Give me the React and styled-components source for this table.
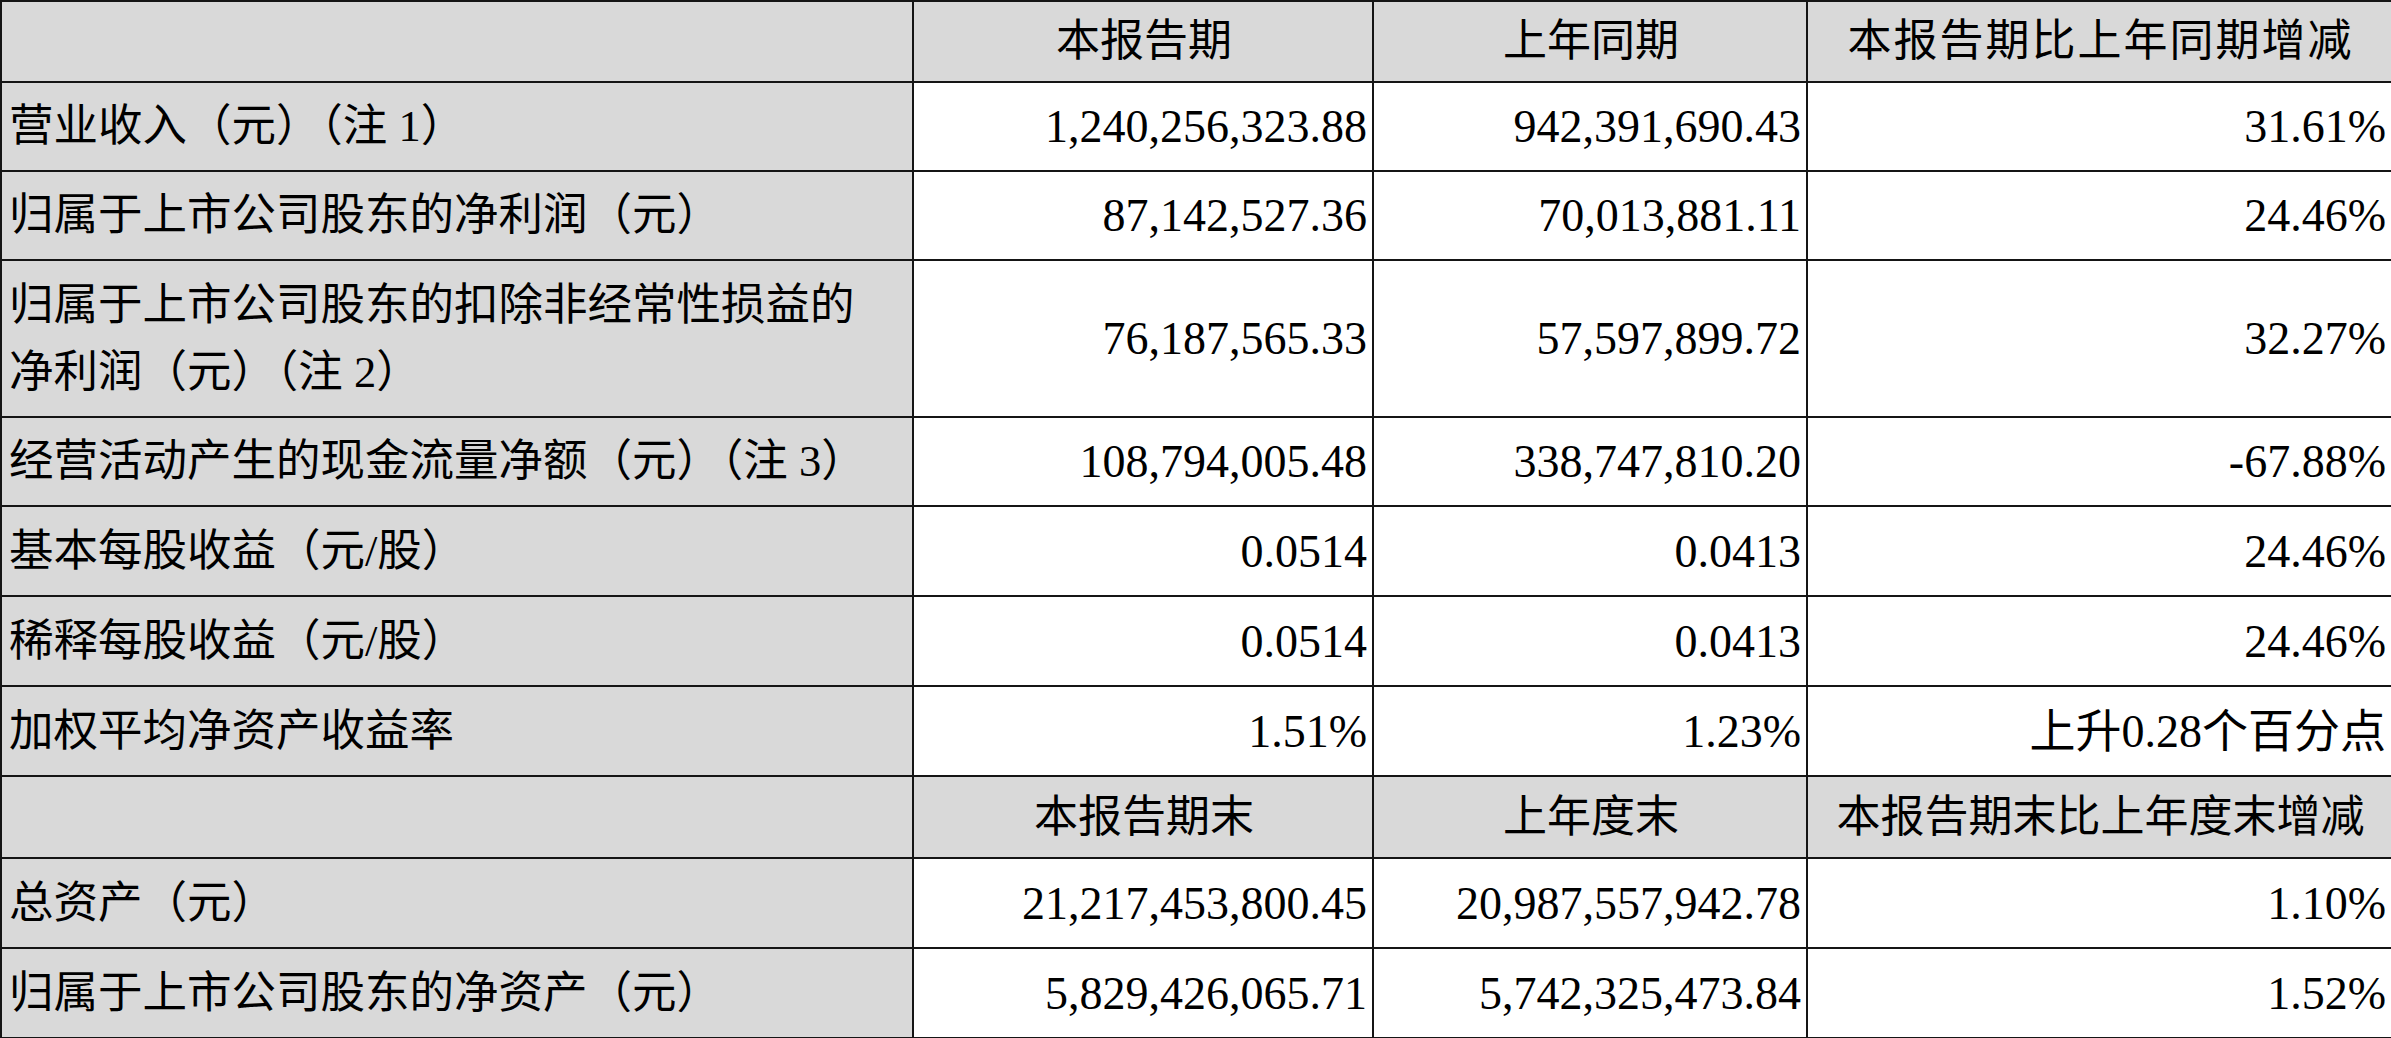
import styled, { createGlobalStyle } from "styled-components";

const GlobalStyle = createGlobalStyle`
  html, body {
    margin: 0;
    padding: 0;
    background: #ffffff;
  }
  body {
    font-family: "Liberation Serif", "Noto Sans CJK SC", serif;
    color: #000;
  }
`;

const Table = styled.table`
  width: 2391px;
  border-collapse: collapse;
  table-layout: fixed;
  font-size: 46px;
  font-family: "Liberation Serif", "Noto Sans CJK SC", serif;
`;

const Row = styled.tr`
  height: ${(p) => p.h}px;
`;

const Cell = styled.td`
  border: 2px solid #151515;
  padding: 0 5px 0 7px;
  vertical-align: middle;
  white-space: nowrap;
  background: #ffffff;
  text-align: right;
  line-height: 67px;
`;

const HeadCell = styled(Cell)`
  background: #d9d9d9;
  text-align: center;
  font-size: 44px;
  letter-spacing: ${(p) => p.$spacing || 0}px;
`;

const Label = styled(Cell)`
  background: #d9d9d9;
  text-align: left;
  font-size: 44.5px;
`;

const periodRows = [
  { h: 89, label: "营业收入（元）（注 1）", a: "1,240,256,323.88", b: "942,391,690.43", c: "31.61%" },
  { h: 89, label: "归属于上市公司股东的净利润（元）", a: "87,142,527.36", b: "70,013,881.11", c: "24.46%" },
  {
    h: 157,
    label: (
      <>
        归属于上市公司股东的扣除非经常性损益的
        <br />
        净利润（元）（注 2）
      </>
    ),
    a: "76,187,565.33",
    b: "57,597,899.72",
    c: "32.27%",
  },
  { h: 89, label: "经营活动产生的现金流量净额（元）（注 3）", a: "108,794,005.48", b: "338,747,810.20", c: "-67.88%" },
  { h: 90, label: "基本每股收益（元/股）", a: "0.0514", b: "0.0413", c: "24.46%" },
  { h: 90, label: "稀释每股收益（元/股）", a: "0.0514", b: "0.0413", c: "24.46%" },
  { h: 90, label: "加权平均净资产收益率", a: "1.51%", b: "1.23%", c: "上升0.28个百分点" },
];

const balanceRows = [
  { h: 90, label: "总资产（元）", a: "21,217,453,800.45", b: "20,987,557,942.78", c: "1.10%" },
  { h: 90, label: "归属于上市公司股东的净资产（元）", a: "5,829,426,065.71", b: "5,742,325,473.84", c: "1.52%" },
];

const DataRow = ({ row }) => (
  <Row h={row.h}>
    <Label>{row.label}</Label>
    <Cell>{row.a}</Cell>
    <Cell>{row.b}</Cell>
    <Cell>{row.c}</Cell>
  </Row>
);

const App = () => {
  return (
    <>
      <GlobalStyle />
      <Table>
        <colgroup>
          <col style={{ width: 912 }} />
          <col style={{ width: 460 }} />
          <col style={{ width: 434 }} />
          <col style={{ width: 585 }} />
        </colgroup>
        <tbody>
          <Row h={81}>
            <HeadCell />
            <HeadCell>本报告期</HeadCell>
            <HeadCell>上年同期</HeadCell>
            <HeadCell $spacing={2}>本报告期比上年同期增减</HeadCell>
          </Row>
          {periodRows.map((row, i) => (
            <DataRow key={"p" + i} row={row} />
          ))}
          <Row h={82}>
            <HeadCell />
            <HeadCell>本报告期末</HeadCell>
            <HeadCell>上年度末</HeadCell>
            <HeadCell>本报告期末比上年度末增减</HeadCell>
          </Row>
          {balanceRows.map((row, i) => (
            <DataRow key={"b" + i} row={row} />
          ))}
        </tbody>
      </Table>
    </>
  );
};

export default App;
